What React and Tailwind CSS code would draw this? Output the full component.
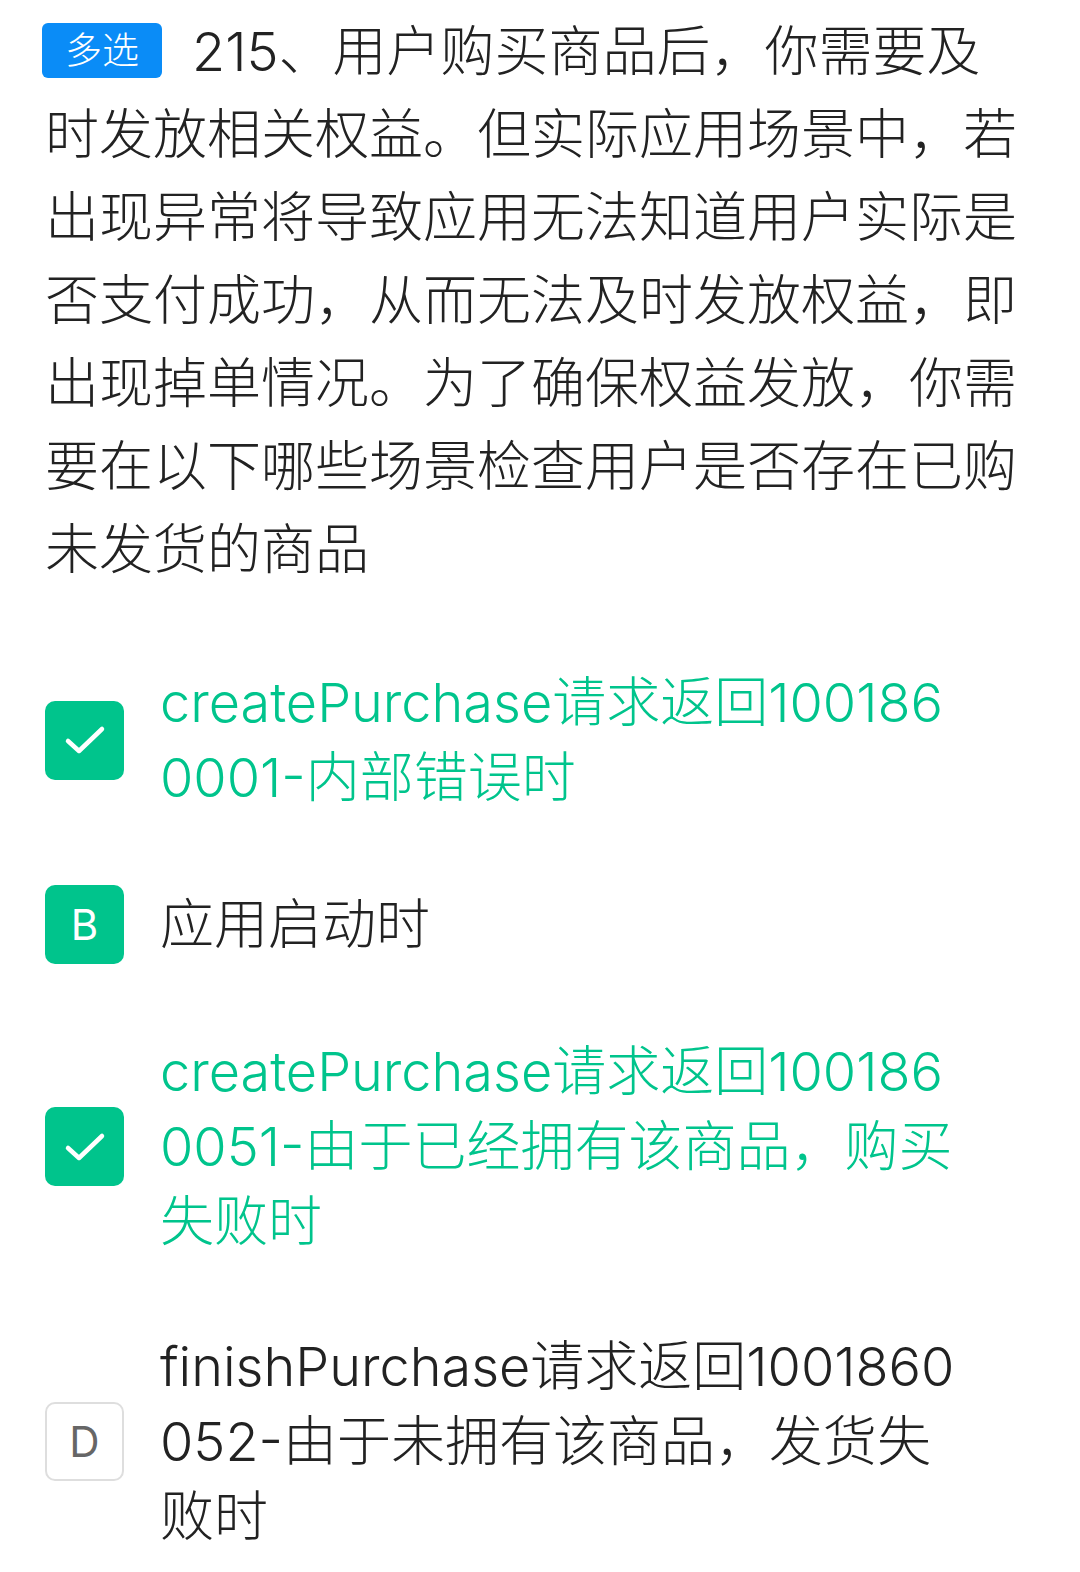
import React from 'react';

const options = [
  { key: 'A', text: 'createPurchase请求返回1001860001-内部错误时', state: 'checked' },
  { key: 'B', text: '应用启动时', state: 'filled' },
  { key: 'C', text: 'createPurchase请求返回1001860051-由于已经拥有该商品，购买失败时', state: 'checked' },
  { key: 'D', text: 'finishPurchase请求返回1001860052-由于未拥有该商品，发货失败时', state: 'empty' },
];

const Check = () => (
  <svg width="42" height="30" viewBox="0 0 42 30" fill="none">
    <path d="M4 16 L15 26 L38 4" stroke="white" strokeWidth="4.5" strokeLinecap="round" strokeLinejoin="round" />
  </svg>
);

const Marker = ({ opt }) => {
  if (opt.state === 'empty') {
    return (
      <div className="w-[79px] h-[79px] shrink-0 rounded-[10px] border-2 border-[#dedede] bg-white flex items-center justify-center text-[42px] text-[#666] leading-none">
        {opt.key}
      </div>
    );
  }
  return (
    <div className="w-[79px] h-[79px] shrink-0 rounded-[10px] bg-[#00c48c] flex items-center justify-center text-[42px] text-white leading-none">
      {opt.state === 'checked' ? <Check /> : opt.key}
    </div>
  );
};

export default function App() {
  return (
    <div
      className="bg-white min-h-[1572px] pl-[45px] pr-[55px] pt-[10px] text-[#222]"
      style={{ fontFamily: 'Inter, "Noto Sans CJK SC", sans-serif' }}
    >
      <p className="text-[54px] leading-[83px] break-all font-light">
        <span className="inline-flex items-center justify-center align-middle w-[120px] h-[55px] rounded-[6px] bg-[#0a8cf7] text-white text-[37px] leading-none mr-[30px] -mt-[12px] -ml-[3px]">
          多选
        </span>
        215、用户购买商品后，你需要及时发放相关权益。但实际应用场景中，若出现异常将导致应用无法知道用户实际是否支付成功，从而无法及时发放权益，即出现掉单情况。为了确保权益发放，你需要在以下哪些场景检查用户是否存在已购未发货的商品
      </p>

      <div className="mt-[39px] flex flex-col">
        {options.map((opt) => (
          <div key={opt.key} className="flex items-center py-[35px]">
            <Marker opt={opt} />
            <div
              className={`ml-[36px] w-[812px] text-[54px] leading-[75px] break-all font-light ${
                opt.state === 'checked' ? 'text-[#00c48c]' : 'text-[#222]'
              }`}
            >
              {opt.text}
            </div>
          </div>
        ))}
      </div>
    </div>
  );
}
